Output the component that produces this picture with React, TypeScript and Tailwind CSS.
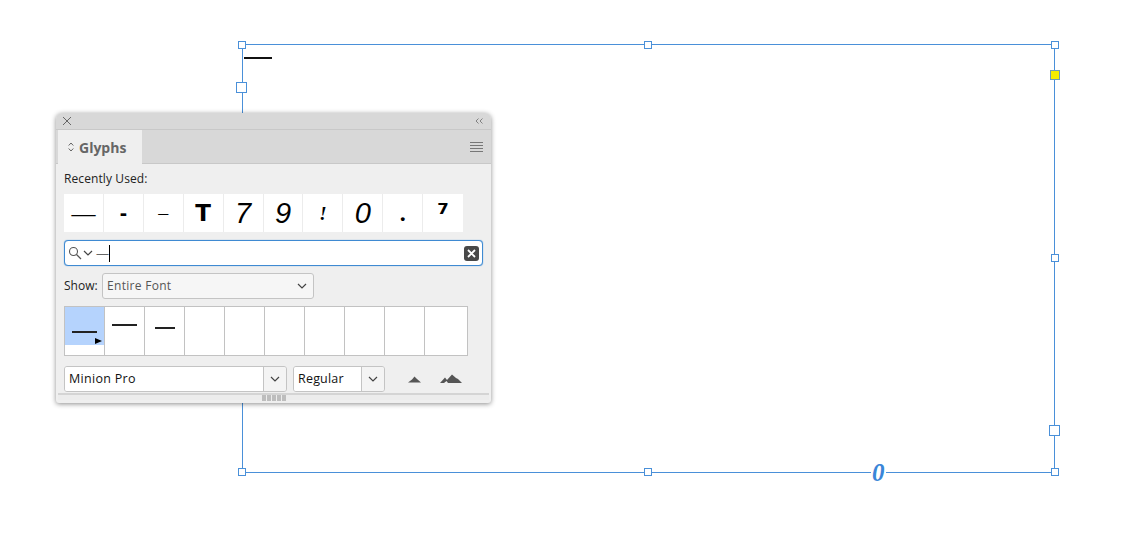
import React from 'react';

const uiFont = { fontFamily: '"Open Sans", "Noto Sans", sans-serif' };

const recent = [
  { ch: '—', cls: 'text-[24px] font-["Liberation_Serif"]' },
  { ch: '-', cls: 'text-[22px] font-bold font-["Liberation_Sans"]' },
  { ch: '–', cls: 'text-[20px] font-["Liberation_Serif"]' },
  { ch: 'T', cls: 'text-[23px] font-black font-["DejaVu_Sans"]' },
  { ch: '7', cls: 'text-[29px] italic font-["Liberation_Sans"]' },
  { ch: '9', cls: 'text-[29px] italic font-["Liberation_Sans"]' },
  { ch: '!', cls: 'text-[19px] italic font-bold font-["Liberation_Serif"]' },
  { ch: '0', cls: 'text-[29px] italic font-["Liberation_Sans"]' },
  { ch: '.', cls: 'text-[24px] font-bold font-["Liberation_Serif"]' },
  { ch: '⁷', cls: 'text-[27px] font-bold font-["DejaVu_Sans"]' },
];

function Handle({ x, y, size = 8 }: { x: number; y: number; size?: number }) {
  return (
    <div
      className="absolute border border-[#4a90d9] bg-white"
      style={{ left: x - size / 2, top: y - size / 2, width: size, height: size }}
    />
  );
}

function Chevron({ className }: { className: string }) {
  return (
    <svg className={className} width="10" height="6" viewBox="0 0 10 6" fill="none">
      <path d="M1 1l4 4 4-4" stroke="#444" strokeWidth="1.2" />
    </svg>
  );
}

function Mountain({ big }: { big?: boolean }) {
  return big ? (
    <svg width="22" height="10" viewBox="0 0 22 10">
      <path d="M0 9L5 3.5 7 6 12 0.5 16 4l2 1 4 4H8L6.5 7 4 9z" fill="#555" />
    </svg>
  ) : (
    <svg width="13" height="7" viewBox="0 0 13 7">
      <path d="M0 6.5L4 3.5 6.5 0.5 9 3l4 3.5z" fill="#555" />
    </svg>
  );
}

function Panel() {
  return (
    <div
      className="absolute left-[56px] top-[113px] flex h-[290px] w-[435px] flex-col overflow-hidden rounded-t-[6px] rounded-b-[3px] bg-[#efefef] shadow-[0_1px_5px_rgba(0,0,0,0.45)]"
      style={uiFont}
    >
      {/* title strip */}
      <div className="flex h-[17px] shrink-0 items-center justify-between border-b border-[#c8c8c8] bg-[#d8d8d8] pl-[6px] pr-[8px]">
        <svg width="10" height="10" viewBox="0 0 10 10">
          <path d="M1 1l8 8M9 1l-8 8" stroke="#666" strokeWidth="1" />
        </svg>
        <svg width="8" height="6" viewBox="0 0 8 6" fill="none">
          <path d="M3.5 0.5L1 3l2.5 2.5M7.5 0.5L5 3l2.5 2.5" stroke="#777" strokeWidth="0.9" />
        </svg>
      </div>
      {/* tab row */}
      <div className="flex h-[34px] shrink-0 items-stretch justify-between border-b border-[#c8c8c8] bg-[#d8d8d8] pl-[2px] pr-[8px]">
        <div className="-mb-px flex w-[84px] items-center gap-[5px] bg-[#efefef] pl-[10px]">
          <svg width="6" height="10" viewBox="0 0 6 10" fill="none">
            <path d="M0.7 3.5L3 1l2.3 2.5M0.7 6.5L3 9l2.3-2.5" stroke="#555" strokeWidth="0.9" />
          </svg>
          <span className="text-[14px] font-bold text-[#666]">Glyphs</span>
        </div>
        <div className="flex flex-col justify-center gap-[2px]">
          <div className="h-px w-[13px] bg-[#777]" />
          <div className="h-px w-[13px] bg-[#777]" />
          <div className="h-px w-[13px] bg-[#777]" />
          <div className="h-px w-[13px] bg-[#777]" />
        </div>
      </div>
      {/* body */}
      <div className="flex flex-1 flex-col pl-[8px] pr-[8px]">
        <div className="mt-[7px] h-[16px] pl-[-1px] text-[12px] leading-[16px] tracking-[0.1px] text-[#222]">
          Recently Used:
        </div>
        <div className="mt-[7px] flex h-[38px] w-[399px] bg-white">
          {recent.map((r, i) => (
            <div
              key={i}
              className={`flex w-[40px] items-center justify-center border-r border-[#ececec] leading-none text-black last:border-r-0 ${r.cls}`}
            >
              {r.ch}
            </div>
          ))}
        </div>
        <div className="mt-[8px] flex h-[26px] w-[419px] items-center rounded-[4px] border border-[#3f8ad2] bg-white pl-[3px] pr-[3px] shadow-[0_0_1px_#3f8ad2]">
          <svg width="14" height="14" viewBox="0 0 14 14" fill="none">
            <circle cx="5.5" cy="5.5" r="4" stroke="#555" strokeWidth="1.1" />
            <path d="M8.5 8.5L13 13" stroke="#555" strokeWidth="1.3" />
          </svg>
          <Chevron className="ml-[1px]" />
          <span className="ml-[3px] text-[13px] leading-none text-[#666]">—</span>
          <div className="h-[17px] w-px bg-black" />
          <div className="ml-auto flex h-[15px] w-[15px] items-center justify-center rounded-[3px] bg-[#484848]">
            <svg width="9" height="9" viewBox="0 0 9 9">
              <path d="M1 1l7 7M8 1L1 8" stroke="#fff" strokeWidth="1.8" />
            </svg>
          </div>
        </div>
        <div className="mt-[7px] flex h-[26px] items-center">
          <span className="w-[38px] text-[12px] text-[#222]">Show:</span>
          <div className="flex h-[26px] w-[212px] items-center justify-between rounded-[3px] border border-[#c4c4c4] bg-[#f6f6f6] pl-[4px] pr-[6px] text-[12px] tracking-[0.3px] text-[#555]">
            Entire Font
            <Chevron className="" />
          </div>
        </div>
        <div className="mt-[7px] flex h-[50px] w-[404px] border border-[#c2c2c2] bg-white">
          <div className="relative w-[40px] border-r border-[#c2c2c2]">
            <div className="flex h-[38px] items-center justify-center bg-[#b5d3fd] pt-[12px]">
              <div className="h-[2px] w-[25px] bg-[#222]" />
            </div>
            <div className="absolute right-[2px] top-[31px] h-0 w-0 border-y-[3.5px] border-l-[7px] border-y-transparent border-l-black" />
          </div>
          <div className="flex w-[40px] justify-center border-r border-[#c2c2c2] pt-[17px]">
            <div className="h-[2px] w-[25px] bg-[#222]" />
          </div>
          <div className="flex w-[40px] justify-center border-r border-[#c2c2c2] pt-[20px]">
            <div className="h-[2px] w-[20px] bg-[#222]" />
          </div>
          {[0, 1, 2, 3, 4, 5].map((i) => (
            <div key={i} className="w-[40px] border-r border-[#c2c2c2]" />
          ))}
        </div>
        <div className="mt-[10px] flex h-[26px] items-center">
          <div className="flex h-[26px] w-[223px] overflow-hidden rounded-[3px] border border-[#c4c4c4]">
            <div className="flex flex-1 items-center bg-white pl-[4px] text-[12.5px] tracking-[0.3px] text-[#111]">
              Minion Pro
            </div>
            <div className="flex w-[23px] items-center justify-center border-l border-[#c4c4c4] bg-[#f4f4f4]">
              <Chevron className="" />
            </div>
          </div>
          <div className="ml-[6px] flex h-[26px] w-[92px] overflow-hidden rounded-[3px] border border-[#c4c4c4]">
            <div className="flex flex-1 items-center bg-white pl-[4px] text-[12.5px] tracking-[0.2px] text-[#111]">
              Regular
            </div>
            <div className="flex w-[23px] items-center justify-center border-l border-[#c4c4c4] bg-[#f4f4f4]">
              <Chevron className="" />
            </div>
          </div>
          <div className="ml-[23px] flex w-[13px] justify-center">
            <Mountain />
          </div>
          <div className="ml-[19px]">
            <Mountain big />
          </div>
        </div>
      </div>
      {/* resize strip */}
      <div className="mb-[3px] mt-auto flex h-[7px] shrink-0 items-center justify-center border-t-[2px] border-[#d4d4d4] bg-[#ececec] ml-[2px] mr-[2px]">
        <div className="flex gap-px">
          {[0, 1, 2, 3, 4].map((i) => (
            <div key={i} className="h-[6px] w-[4px] bg-[#bdbdbd]" />
          ))}
        </div>
      </div>
    </div>
  );
}

export default function App() {
  return (
    <div className="relative h-[536px] w-[1121px] overflow-hidden bg-white">
      {/* text frame on the canvas */}
      <div className="absolute left-[242px] top-[44px] h-[429px] w-[813px] border border-[#4a90d9]" />
      <div className="absolute left-[244px] top-[57px] h-[2px] w-[28px] bg-[#111]" />
      <Handle x={241.5} y={44.5} />
      <Handle x={648} y={44.5} />
      <Handle x={1054.5} y={44.5} />
      <Handle x={1054.5} y={258} />
      <Handle x={241.5} y={472} />
      <Handle x={648} y={472} />
      <Handle x={1054.5} y={472} />
      <Handle x={241.5} y={87.5} size={11} />
      <Handle x={1054.5} y={430.5} size={11} />
      <div className="absolute left-[1050px] top-[70px] h-[10px] w-[10px] border border-[#6e9bb5] bg-[#f5ec00]" />
      <div className="absolute left-[871px] top-[459px] bg-white px-[1px] font-['Liberation_Serif'] text-[25px] font-bold italic leading-[28px] text-[#3a86d8]">
        0
      </div>
      <Panel />
    </div>
  );
}
